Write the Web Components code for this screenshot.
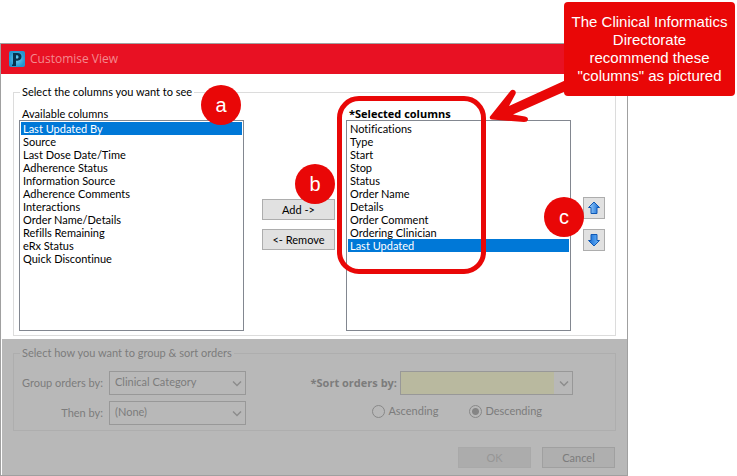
<!DOCTYPE html>
<html lang="en">
<head>
<meta charset="utf-8">
<title>Customise View</title>
<style>
    body { margin: 0; background: #fff; color: #000; font: 11px/16px Lato, "Liberation Sans", sans-serif; }
</style>
</head>
<body>
<customise-page></customise-page>

<script>
const define = (name, html, setup) => {
    const template = document.createElement('template');
    template.innerHTML = html;
    customElements.define(name, class extends HTMLElement {
        constructor() {
            super();
            this.attachShadow({ mode: 'open' }).append(template.content.cloneNode(true));
        }
        connectedCallback() {
            if (setup && !this.ready) setup(this, this.shadowRoot);
            this.ready = true;
        }
    });
};

// Round lettered marker, placed by its parent
define('step-badge', `
    <style>
        :host { position: absolute; z-index: 3; display: flex; align-items: center; justify-content: center; width: 40px; height: 40px; border-radius: 50%; background: #e90707; color: #fff; font: 20px/24px "Liberation Sans", sans-serif; }
    </style>
    <slot></slot>
`);

define('push-button', `
    <style>
        :host { display: block; width: 73px; height: 21px; }
        :host([square]) { width: 22px; height: 22px; }
        button { display: flex; align-items: center; justify-content: center; width: 100%; height: 100%; margin: 0; padding: 0; border: 1px solid var(--button-border, #adadad); background: var(--button-face, #e1e1e1); color: var(--ink, #000); font: inherit; }
        button:disabled { border-color: #a9a9a9; background: #acacac; color: #969696; }
    </style>
    <button type="button"><slot></slot></button>
`, (el, root) => {
    const button = root.querySelector('button');
    button.disabled = el.hasAttribute('disabled');
    if (el.hasAttribute('label')) button.setAttribute('aria-label', el.getAttribute('label'));
});

define('group-box', `
    <style>
        :host { display: block; }
        fieldset { min-width: 0; margin: 0; padding: var(--group-padding, 6px 10px 4px 5px); border: 1px solid var(--group-border, #dcdcdc); }
        legend { margin-left: 1px; padding: 0 2px; line-height: 16px; color: var(--ink, #000); }
    </style>
    <fieldset><legend></legend><slot></slot></fieldset>
`, (el, root) => {
    root.querySelector('legend').textContent = el.getAttribute('legend');
});

define('column-list', `
    <style>
        :host { position: relative; display: block; flex: 1; min-width: 0; }
        label { display: block; height: 14px; padding-left: 3px; line-height: 16px; }
        :host([required]) label { font: bold 11px/16px "Open Sans", sans-serif; }
        select { display: block; box-sizing: border-box; width: 100%; height: 211px; margin: 0; padding: 1px; border: 1px solid #828790; border-radius: 0; outline: 0; background: #fff; color: #000; font: inherit; font-variant-ligatures: none; overflow: hidden; }
        option { box-sizing: border-box; height: 13px; min-height: 13px; padding: 0 2px; line-height: 13px; }
        option:checked { background: #0078d7 linear-gradient(#0078d7, #0078d7); color: #fff; -webkit-text-fill-color: #fff; }
    </style>
    <label for="list"></label>
    <select id="list" size="16"></select>
    <slot></slot>
`, (el, root) => {
    root.querySelector('label').textContent = el.getAttribute('label');
    const list = root.querySelector('select');
    el.getAttribute('items').split('|').forEach(text => list.add(new Option(text)));
    list.selectedIndex = Number(el.getAttribute('selected'));
});

define('combo-field', `
    <style>
        :host { display: flex; align-items: center; justify-content: flex-end; gap: 6px; color: var(--ink); }
        :host([required]) { gap: 3px; }
        :host([required]) label { font: bold 11px/16px "Open Sans", sans-serif; }
        .box { position: relative; width: 137px; }
        :host([required]) .box { width: 173px; }
        select { appearance: none; display: block; box-sizing: border-box; width: 100%; height: 24px; margin: 0; padding: 0 20px 3px 5px; border: 1px solid #989898; border-radius: 0; background: #b8b8b8; color: inherit; font: inherit; }
        :host([required]) select { background: linear-gradient(to right, #b9b99f calc(100% - 18px), #b8b8b8 0); }
        svg { position: absolute; right: 4px; top: 9px; pointer-events: none; }
    </style>
    <label for="combo"></label>
    <div class="box">
        <select id="combo"></select>
        <svg width="10" height="8" viewBox="0 0 10 8" fill="none" stroke="#8c8c8c" stroke-width="1.4"><path d="M1 1.5l4 4 4-4"/></svg>
    </div>
`, (el, root) => {
    root.querySelector('label').textContent = el.getAttribute('label');
    root.querySelector('select').add(new Option(el.getAttribute('value') || ''));
});

define('sort-direction', `
    <style>
        :host { display: flex; gap: 31px; padding-right: 31px; color: var(--ink); }
        label { display: flex; align-items: center; gap: 3px; }
        input { appearance: none; box-sizing: border-box; width: 13px; height: 13px; margin: 0; border: 1px solid #888; border-radius: 50%; }
        input:checked { background: radial-gradient(circle, #858585 3px, transparent 4px); }
    </style>
    <label><input type="radio" name="direction">Ascending</label>
    <label><input type="radio" name="direction" checked>Descending</label>
`);

define('title-bar', `
    <style>
        :host { display: flex; align-items: center; gap: 5px; height: 30px; padding-left: 8px; background: #e81123; color: #f4898f; font: 12px/16px "Open Sans", sans-serif; }
    </style>
    <svg width="16" height="16" viewBox="0 0 16 16">
        <defs><radialGradient id="sky"><stop offset="0" stop-color="#6fd0f5"/><stop offset="1" stop-color="#2596cf"/></radialGradient></defs>
        <rect width="16" height="16" rx="2" fill="url(#sky)"/>
        <path d="M4 2h4.500c2.600 0 4 1.500 4 3.800s-1.500 3.900-4 3.900H7V15H3V13.500h1zM7 4.300v3.200h1c1 0 1.500-.6 1.500-1.600s-.5-1.600-1.500-1.600z" fill="#07334f"/>
    </svg>
    <slot></slot>
`);

define('column-picker', `
    <style>
        :host { display: flex; align-items: flex-start; }
        .move, .order { position: relative; display: flex; flex-direction: column; }
        .move { gap: 9px; margin: 93px 11px 0 18px; }
        .order { gap: 10px; margin: 91px 0 0 12px; }
        .available { right: 3px; top: -21px; }
        .move step-badge { right: 0; top: -35px; }
        .order step-badge { left: -39px; top: 0; }
        .highlight { position: absolute; z-index: 2; left: -9px; top: -10px; box-sizing: border-box; width: 149px; height: 178px; border: 5px solid #e90707; border-radius: 22px; pointer-events: none; }
    </style>
    <column-list label="Available columns" selected="0"
        items="Last Updated By|Source|Last Dose Date/Time|Adherence Status|Information Source|Adherence Comments|Interactions|Order Name/Details|Refills Remaining|eRx Status|Quick Discontinue">
        <step-badge class="available">a</step-badge>
    </column-list>
    <div class="move">
        <push-button>Add -&gt;</push-button>
        <push-button>&lt;- Remove</push-button>
        <step-badge>b</step-badge>
    </div>
    <column-list required label="*Selected columns" selected="9"
        items="Notifications|Type|Start|Stop|Status|Order Name|Details|Order Comment|Ordering Clinician|Last Updated">
        <div class="highlight"></div>
    </column-list>
    <div class="order">
        <push-button square label="Move up">
            <svg width="14" height="14" viewBox="0 0 14 14">
                <defs><linearGradient id="up" x2="1"><stop offset="0" stop-color="#a5d8ff"/><stop offset="1" stop-color="#1268d3"/></linearGradient></defs>
                <path d="M7 1l5.500 5.500H10v6H4v-6H1.500z" fill="url(#up)" stroke="#1059b5"/>
            </svg>
        </push-button>
        <push-button square label="Move down">
            <svg width="14" height="14" viewBox="0 0 14 14">
                <defs><linearGradient id="down" x1="1" x2="0"><stop offset="0" stop-color="#6fb9fb"/><stop offset="1" stop-color="#1268d3"/></linearGradient></defs>
                <path d="M7 13l5.500-5.500H10v-6H4v6H1.500z" fill="url(#down)" stroke="#1059b5"/>
            </svg>
        </push-button>
        <step-badge>c</step-badge>
    </div>
`);

define('sort-options', `
    <style>
        :host { display: flex; justify-content: space-between; }
        div { display: flex; flex-direction: column; align-items: flex-end; }
        .group { gap: 6px; width: 227px; }
        .sort { gap: 8px; }
    </style>
    <div class="group">
        <combo-field label="Group orders by:" value="Clinical Category"></combo-field>
        <combo-field label="Then by:" value="(None)"></combo-field>
    </div>
    <div class="sort">
        <combo-field required label="*Sort orders by:"></combo-field>
        <sort-direction></sort-direction>
    </div>
`);

define('view-dialog', `
    <style>
        :host { display: block; border: 1px solid #a0a0a0; }
        .columns { padding: 10px 11px 3px 12px; }
        .sorting { --ink: #7c7c7c; --group-border: #aeaeae; --group-padding: 10px 42px 5px 5px; --button-face: #afafaf; --button-border: #a0a0a0; margin-left: 1px; padding: 6px 11px 7px; background: #b8b8b8; }
        footer { display: flex; justify-content: flex-end; gap: 11px; padding: 16px 1px 0 0; }
    </style>
    <title-bar>Customise View</title-bar>
    <div class="columns">
        <group-box legend="Select the columns you want to see"><column-picker></column-picker></group-box>
    </div>
    <div class="sorting">
        <group-box legend="Select how you want to group &amp; sort orders"><sort-options></sort-options></group-box>
        <footer>
            <push-button disabled>OK</push-button>
            <push-button>Cancel</push-button>
        </footer>
    </div>
`);

// Note with an arrow that points down to the left
define('call-out', `
    <style>
        :host { position: absolute; z-index: 4; right: 2px; top: 2px; box-sizing: border-box; width: 171px; padding: 11px 6px; border-radius: 4px; background: #e90707; color: #fff; font: 15px/18px "Liberation Sans", sans-serif; text-align: center; }
        svg { position: absolute; right: 100%; top: 74px; margin-right: -2px; }
    </style>
    <slot></slot>
    <svg width="78" height="50" viewBox="0 0 78 50" fill="#e90707"><path d="M78 4L21 30 27.500 18Q28.500 15 26 14 23.500 13 22 15.500L2 40.500Q1 43 4 43.500L36 46Q39.500 46 40 43.500 40 41 37 40.500L25 38.500 78 15z"/></svg>
`);

define('customise-page', `
    <style>
        :host { position: relative; display: block; }
        view-dialog { margin-right: 109px; }
        main { padding-top: 43px; }
    </style>
    <main><view-dialog></view-dialog></main>
    <call-out>The Clinical Informatics<br>Directorate<br>recommend these<br>"columns" as pictured</call-out>
`);
</script>
</body>
</html>
